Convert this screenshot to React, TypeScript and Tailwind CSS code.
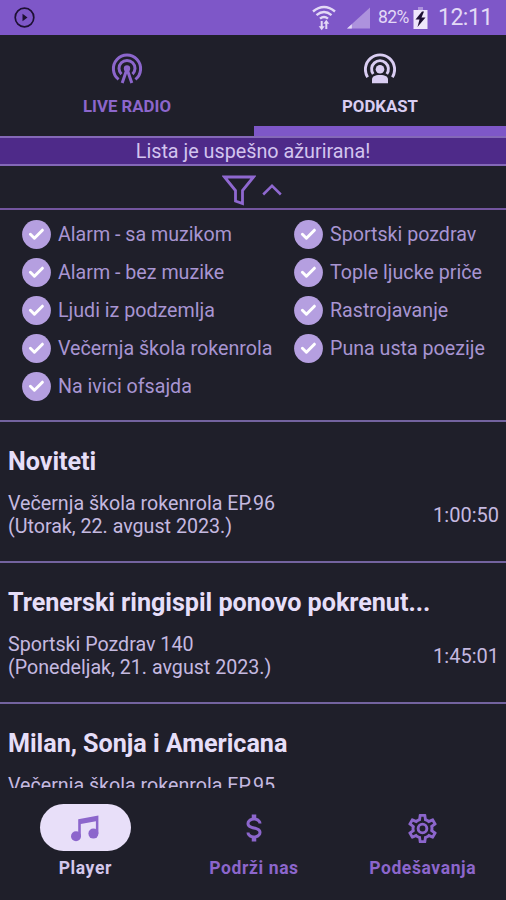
import React, { useState } from 'react';

interface Filter {
  id: string;
  label: string;
}

interface Episode {
  title: string;
  show: string;
  date: string;
  duration: string;
}

const leftFilters: Filter[] = [
  { id: 'alarm-music', label: 'Alarm - sa muzikom' },
  { id: 'alarm', label: 'Alarm - bez muzike' },
  { id: 'ljudi', label: 'Ljudi iz podzemlja' },
  { id: 'skola', label: 'Večernja škola rokenrola' },
  { id: 'ofsajd', label: 'Na ivici ofsajda' },
];

const rightFilters: Filter[] = [
  { id: 'sportski', label: 'Sportski pozdrav' },
  { id: 'price', label: 'Tople ljucke priče' },
  { id: 'rastrojavanje', label: 'Rastrojavanje' },
  { id: 'poezija', label: 'Puna usta poezije' },
];

const episodes: Episode[] = [
  { title: 'Noviteti', show: 'Večernja škola rokenrola EP.96', date: '(Utorak, 22. avgust 2023.)', duration: '1:00:50' },
  { title: 'Trenerski ringispil ponovo pokrenut...', show: 'Sportski Pozdrav 140', date: '(Ponedeljak, 21. avgust 2023.)', duration: '1:45:01' },
  { title: 'Milan, Sonja i Americana', show: 'Večernja škola rokenrola EP.95', date: '', duration: '' },
];

const StatusBar = () => (
  <div className="flex h-[35px] shrink-0 items-center bg-[#7e57c8] pl-[14px] pr-[14px] text-[#e3d9f6]">
    <svg width="21" height="21" viewBox="0 0 21 21" className="text-[#1d1033]">
      <circle cx="10.5" cy="10.5" r="9.3" fill="none" stroke="currentColor" strokeWidth="1.7" />
      <path d="M8.5 6.8v7.4l5-3.7z" fill="currentColor" />
    </svg>
    <div className="flex-1" />
    <svg width="24" height="26" viewBox="0 0 24 26" fill="none" stroke="currentColor" strokeWidth="2.4">
      <path d="M1 6.5Q12-2.5 23 6.5M4.5 10.2Q12 4 19.5 10.2M8 13.6Q12 10.3 16 13.6" />
      <path d="M9.7 16v7M14.3 24v-7" strokeWidth="2" />
      <path d="M6.7 21.3h6L9.7 25.3zM11.3 18.7h6l-3-4z" fill="currentColor" stroke="none" />
    </svg>
    <svg width="23" height="22" viewBox="0 0 24 22" className="ml-[11px]">
      <path d="M0 22L24 0V22z" fill="#ad92dd" />
      <path d="M0 22l5-4.6V22z" fill="currentColor" />
    </svg>
    <span className="ml-[8px] w-[31px] whitespace-nowrap text-[17.5px] tracking-[-0.6px]">82%</span>
    <svg width="15" height="22" viewBox="0 0 14 22" className="ml-[4px]">
      <path d="M4.5 0h5v3h-5z" fill="#ad92dd" />
      <path d="M0 3h14v19H0z" fill="#eee6fb" />
      <path d="M8.5 4.5L2 12.5h4L4 20l8-9.5H8l2.5-6z" fill="#1d1033" />
    </svg>
    <span className="ml-[10px] w-[54px] whitespace-nowrap pt-[2px] text-[23px] tracking-[-0.5px]">12:11</span>
  </div>
);

const RadioIcon = () => (
  <svg width="32" height="32" viewBox="0 0 32 32" fill="none" stroke="currentColor" strokeWidth="3">
    <path d="M7.6 26.4A13.6 13.6 0 1 1 24.4 26.4" />
    <path d="M10.5 21.2A8 8 0 1 1 21.5 21.2" />
    <circle cx="16" cy="15.5" r="3.2" fill="currentColor" stroke="none" />
    <path d="M16 16L11.2 30M16 16L20.8 30" />
  </svg>
);

const PodcastIcon = () => (
  <svg width="32" height="32" viewBox="0 0 32 32" fill="none" stroke="currentColor" strokeWidth="2.9">
    <path d="M3.6 24.2A14.6 14.6 0 1 1 28.4 24.2" />
    <path d="M9.2 21A8.4 8.4 0 1 1 22.8 21" />
    <circle cx="16" cy="16.2" r="4.3" fill="currentColor" stroke="none" />
    <path d="M8 30.3v-3.6C8 23.6 10.5 22 16 22s8 1.6 8 4.7v3.6z" fill="currentColor" stroke="none" />
  </svg>
);

const CheckRow: React.FC<{ filter: Filter }> = ({ filter }) => {
  const [checked, setChecked] = useState(true);

  return (
    <button onClick={() => setChecked(!checked)} className="flex h-[38px] items-center text-left">
      <svg width="29" height="29" viewBox="0 0 29 29" className="shrink-0">
        <circle cx="14.5" cy="14.5" r="14.4" fill="#b59fe0" />
        {checked && (
          <path d="M8.4 14.3l4 3.9 8-8" fill="none" stroke="#fff" strokeWidth="3" strokeLinecap="round" strokeLinejoin="round" />
        )}
      </svg>
      <span className="ml-[7px] whitespace-nowrap pt-px text-[19.65px] leading-6 text-[#a895d2]">{filter.label}</span>
    </button>
  );
};

const EpisodeRow: React.FC<{ episode: Episode }> = ({ episode }) => (
  <div className="h-[141px] shrink-0 border-b-2 border-[#73639f] px-2 pt-6">
    <h2 className="whitespace-nowrap text-[25.2px] font-bold leading-8 tracking-[-0.05px] text-[#e6def8]">{episode.title}</h2>
    <div className="mt-[14px] flex items-center justify-between text-[19.65px] leading-[23px] text-[#c5b9e0]">
      <div className="whitespace-nowrap">
        <p>{episode.show}</p>
        <p>{episode.date}</p>
      </div>
      <span className="-mr-[1px] text-[20px]">{episode.duration}</span>
    </div>
  </div>
);

export default function App() {
  const [open, setOpen] = useState(true);

  return (
    <div className="flex h-[900px] w-[506px] flex-col overflow-hidden bg-[#1f1f2a] font-[Roboto,sans-serif]">
      <StatusBar />

      <div className="flex h-[101px] shrink-0 text-[16.8px] font-bold leading-5">
        <button className="flex w-[254px] flex-col items-center pt-[18px] text-[#8c66cc]">
          <RadioIcon />
          <span className="mt-[11px]">LIVE RADIO</span>
        </button>
        <button className="flex flex-1 flex-col items-center border-b-10 border-[#7e57c8] pt-[18px] text-[#d9cdf2]">
          <PodcastIcon />
          <span className="mt-[11px]">PODKAST</span>
        </button>
      </div>

      <div className="flex h-[30px] shrink-0 items-center justify-center border-y-2 border-[#8468b8] bg-[#4e2a89] text-[19.75px] text-[#d3c4ef]">
        <span className="pt-px">Lista je uspešno ažurirana!</span>
      </div>

      <button
        onClick={() => setOpen(!open)}
        className="flex h-[44px] shrink-0 items-center justify-center border-b-2 border-[#73559f] pr-[3px] pt-[6px] text-[#8f68d0]"
      >
        <svg width="34" height="31" viewBox="0 0 34 31" fill="none" stroke="currentColor" strokeWidth="2.8">
          <path d="M2.5 2h29L20.5 15.5v13l-7-2.5V15.5z" />
        </svg>
        <svg width="20" height="12" viewBox="0 0 20 12" fill="none" stroke="currentColor" strokeWidth="2.5" className="ml-[6px]">
          <path d="M1.2 10.5L10 1.8l8.8 8.7" />
        </svg>
      </button>

      {open && (
        <div className="flex h-[212px] shrink-0 border-b-2 border-[#73639f] pl-[22px] pt-[5px]">
          <div className="flex w-[272px] flex-col">
            {leftFilters.map((f) => (
              <CheckRow key={f.id} filter={f} />
            ))}
          </div>
          <div className="flex flex-col">
            {rightFilters.map((f) => (
              <CheckRow key={f.id} filter={f} />
            ))}
          </div>
        </div>
      )}

      <div className="flex min-h-0 flex-1 flex-col overflow-hidden">
        {episodes.map((e) => (
          <EpisodeRow key={e.title} episode={e} />
        ))}
      </div>

      <nav className="-mr-px flex h-[112px] shrink-0 pl-px pt-4 text-[17.5px] font-bold leading-5 tracking-[0.6px] text-[#8c66cc]">
        <button className="flex flex-1 flex-col items-center">
          <span className="flex h-[47px] w-[91px] items-center justify-center rounded-full bg-[#e8dff9]">
            <svg width="30" height="28" viewBox="0 0 30 28" fill="currentColor">
              <circle cx="6" cy="22.3" r="5" />
              <circle cx="23.4" cy="19.6" r="5" />
              <path d="M8.2 5.2L28.4 1.5V19.6h-2.5V7.2L10.8 10V22.3H8.2z" />
            </svg>
          </span>
          <span className="mt-[7px] text-[#d3c8ec]">Player</span>
        </button>
        <button className="flex flex-1 flex-col items-center">
          <span className="flex h-[47px] items-center pt-px">
            <svg width="36" height="36" viewBox="0 0 24 24" fill="currentColor">
              <path d="M7 15h2c0 1.08 1.37 2 3 2s3-.92 3-2c0-1.1-1.04-1.5-3.24-2.03C9.64 12.44 7 11.78 7 9c0-1.79 1.47-3.31 3.5-3.82V3h3v2.18C15.53 5.69 17 7.21 17 9h-2c0-1.08-1.37-2-3-2s-3 .92-3 2c0 1.1 1.04 1.5 3.24 2.03C14.36 11.56 17 12.22 17 15c0 1.79-1.47 3.31-3.5 3.82V21h-3v-2.18C8.47 18.31 7 16.79 7 15" />
            </svg>
          </span>
          <span className="mt-[7px]">Podrži nas</span>
        </button>
        <button className="flex flex-1 flex-col items-center">
          <span className="flex h-[47px] items-center pt-px">
            <svg width="35" height="35" viewBox="0 0 24 24" fill="currentColor">
              <path d="M12 8a4 4 0 0 1 4 4 4 4 0 0 1-4 4 4 4 0 0 1-4-4 4 4 0 0 1 4-4m0 2a2 2 0 0 0-2 2 2 2 0 0 0 2 2 2 2 0 0 0 2-2 2 2 0 0 0-2-2m-2 12c-.25 0-.46-.18-.5-.42l-.37-2.65c-.63-.25-1.17-.59-1.69-.99l-2.49 1.01c-.22.08-.49 0-.61-.22l-2-3.46a.493.493 0 0 1 .12-.64l2.11-1.66L4.5 12l.07-1-2.11-1.63a.493.493 0 0 1-.12-.64l2-3.46c.12-.22.39-.31.61-.22l2.49 1c.52-.39 1.06-.73 1.69-.98l.37-2.65c.04-.24.25-.42.5-.42h4c.25 0 .46.18.5.42l.37 2.65c.63.25 1.17.59 1.69.98l2.49-1c.22-.09.49 0 .61.22l2 3.46c.13.22.07.49-.12.64L19.43 11l.07 1-.07 1 2.11 1.63c.19.15.25.42.12.64l-2 3.46c-.12.22-.39.31-.61.22l-2.49-1c-.52.39-1.06.73-1.69.98l-.37 2.65c-.04.24-.25.42-.5.42h-4m1.25-18l-.37 2.61c-1.2.25-2.26.89-3.03 1.78L5.44 7.35l-.75 1.3L6.8 10.2a5.55 5.55 0 0 0 0 3.6l-2.12 1.56.75 1.3 2.43-1.04c.77.88 1.82 1.52 3.01 1.76l.37 2.62h1.52l.37-2.61c1.19-.25 2.24-.89 3.01-1.77l2.43 1.04.75-1.3-2.12-1.55c.4-1.17.4-2.44 0-3.61l2.11-1.55-.75-1.3-2.41 1.04a5.42 5.42 0 0 0-3.03-1.77L12.75 4h-1.5z" />
            </svg>
          </span>
          <span className="mt-[7px]">Podešavanja</span>
        </button>
      </nav>
    </div>
  );
}
